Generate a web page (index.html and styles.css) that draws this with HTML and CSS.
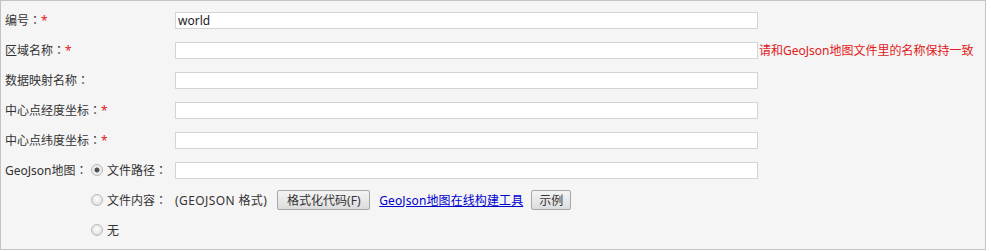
FILE: index.html
```html
<!DOCTYPE html>
<html lang="zh-CN">
<head>
<meta charset="utf-8">
<title>GeoJson</title>
<link rel="stylesheet" href="styles.css">
</head>
<body>
<div class="panel">
  <div class="row">
    <div class="label">编号<span class="colon" lang="zh-TW">：</span><span class="req">*</span></div>
    <input class="text" type="text" value="world">
  </div>
  <div class="row">
    <div class="label">区域名称<span class="colon" lang="zh-TW">：</span><span class="req">*</span></div>
    <input class="text" type="text">
    <span class="hint">请和GeoJson地图文件里的名称保持一致</span>
  </div>
  <div class="row">
    <div class="label">数据映射名称<span class="colon" lang="zh-TW">：</span></div>
    <input class="text" type="text">
  </div>
  <div class="row">
    <div class="label">中心点经度坐标<span class="colon" lang="zh-TW">：</span><span class="req">*</span></div>
    <input class="text" type="text">
  </div>
  <div class="row">
    <div class="label">中心点纬度坐标<span class="colon" lang="zh-TW">：</span><span class="req">*</span></div>
    <input class="text" type="text">
  </div>
  <div class="row">
    <div class="label-a">GeoJson地图<span class="colon" lang="zh-TW">：</span></div>
    <label class="label-b"><input class="radio" type="radio" name="src" checked><span>文件路径<span class="colon" lang="zh-TW">：</span></span></label>
    <input class="text" type="text">
  </div>
  <div class="row">
    <div class="label-a"></div>
    <label class="label-b"><input class="radio" type="radio" name="src"><span>文件内容<span class="colon" lang="zh-TW">：</span></span></label>
    <span class="fmt">(GEOJSON 格式)</span>
    <button class="btn btn-format" type="button">格式化代码(F)</button>
    <a class="link" href="#">GeoJson地图在线构建工具</a>
    <button class="btn btn-demo" type="button">示例</button>
  </div>
  <div class="row">
    <div class="label-a"></div>
    <label class="label-b"><input class="radio" type="radio" name="src"><span>无</span></label>
  </div>
</div>
</body>
</html>
```
FILE: styles.css
```css
html, body {
  margin: 0;
  padding: 0;
  background: #ffffff;
}
body {
  font-family: "Noto Sans", "Noto Sans CJK SC", sans-serif;
  font-size: 12px;
  color: #333333;
}
.panel {
  box-sizing: border-box;
  width: 986px;
  height: 250px;
  border: 1px solid #c4c4c4;
  background: #f5f5f5;
  padding: 4px 0 0 4px;
}
.row {
  display: flex;
  align-items: center;
  height: 30px;
}
.label {
  width: 170px;
  flex: none;
  white-space: nowrap;
  line-height: 17px;
}
.label-a {
  width: 85px;
  flex: none;
  white-space: nowrap;
  line-height: 17px;
}
.label-b {
  width: 85px;
  flex: none;
  display: flex;
  align-items: center;
  white-space: nowrap;
  line-height: 17px;
}
.colon {
  font-family: "Noto Sans CJK TC", sans-serif;
}
.req {
  color: #e02020;
}
.text {
  box-sizing: border-box;
  width: 583px;
  height: 17px;
  margin: 0;
  padding: 0 2px;
  border: 1px solid #d4d4d4;
  background: #ffffff;
  font-family: "Noto Sans", "Noto Sans CJK SC", sans-serif;
  font-size: 12px;
  color: #222222;
  outline: none;
}
.hint {
  color: #e02020;
  margin-left: 1px;
  white-space: nowrap;
  line-height: 17px;
}
.radio {
  appearance: none;
  -webkit-appearance: none;
  box-sizing: border-box;
  width: 12px;
  height: 12px;
  margin: 0 4px 0 1px;
  border: 1px solid #b8b8b8;
  border-radius: 50%;
  background: radial-gradient(circle at 50% 40%, #ffffff 0%, #e6e6e6 60%, #d0d0d0 100%);
  flex: none;
}
.radio:checked {
  background: radial-gradient(circle, #4a4a4a 0, #5a5a5a 2.2px, #e8e8e8 2.8px, #f0f0f0 60%, #d4d4d4 100%);
}
.fmt {
  white-space: nowrap;
  line-height: 17px;
  letter-spacing: 0.4px;
}
.btn {
  box-sizing: border-box;
  height: 20px;
  padding: 0;
  border: 1px solid #a7a7a7;
  border-radius: 2px;
  background: linear-gradient(#f4f4f4, #dcdcdc);
  font-family: "Noto Sans", "Noto Sans CJK SC", sans-serif;
  font-size: 12px;
  color: #333333;
  line-height: 17px;
  white-space: nowrap;
}
.btn-format {
  width: 93px;
  margin-left: 10px;
}
.link {
  margin-left: 9px;
  color: #0000cc;
  text-decoration: underline;
  white-space: nowrap;
  line-height: 17px;
  letter-spacing: 0.1px;
}
.btn-demo {
  width: 40px;
  margin-left: 8px;
}
```
